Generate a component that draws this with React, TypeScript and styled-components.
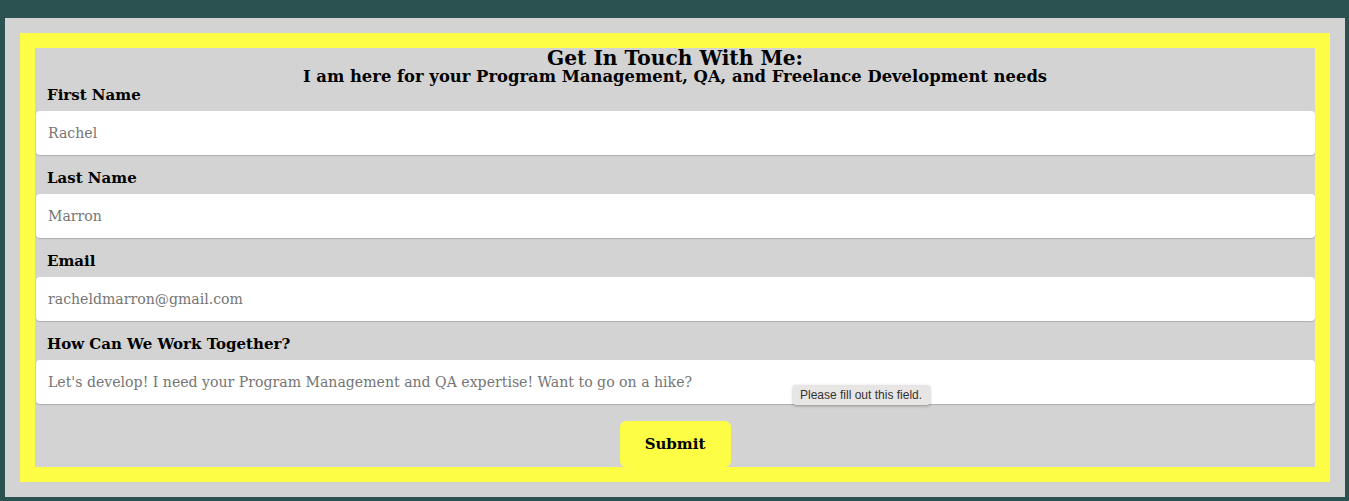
import React from "react";
import styled, { createGlobalStyle } from "styled-components";

const Global = createGlobalStyle`
  html, body { margin: 0; padding: 0; background: #2c5151; }
  body { padding: 18px 4px 4px 5px; }
  * { box-sizing: border-box; }
`;

const Page = styled.div`
  background: #d3d3d3;
  padding: 15px;
  height: 479px;
`;

const Frame = styled.form`
  position: relative;
  border: 15px solid #fdfd46;
  background: #d3d3d3;
  height: 449px;
  display: flex;
  flex-direction: column;
  font-family: "DejaVu Serif", Georgia, serif;
  color: #000;
`;

const Header = styled.header`
  text-align: center;
  height: 37px;
`;

const Title = styled.h2`
  margin: 0;
  font-size: 20.2px;
  line-height: 21px;
  font-weight: 700;
`;

const Subtitle = styled.h3`
  margin: 0;
  font-size: 16.4px;
  line-height: 16px;
  font-weight: 700;
`;

const Field = styled.div`
  position: relative;
  display: flex;
  flex-direction: column;
  margin-bottom: 13px;
`;

const Label = styled.label`
  font-size: 15px;
  font-weight: 700;
  line-height: 20px;
  padding-left: 12px;
  margin-bottom: 6px;
`;

const Input = styled.input`
  margin: 0 0 0 1px;
  width: 1279px;
  height: 44px;
  border: none;
  border-radius: 4px;
  box-shadow: 0 1px 1px rgba(0, 0, 0, 0.18);
  background: #fff;
  padding: 0 12px;
  font-family: "DejaVu Serif", Georgia, serif;
  font-size: 14.1px;
  color: #222;
  outline: none;
  &::placeholder { color: #757575; }
`;

const Tooltip = styled.div`
  position: absolute;
  left: 758px;
  top: 51px;
  background: #e8e5e5;
  color: #333;
  font-family: "Liberation Sans", Arial, sans-serif;
  font-size: 12px;
  line-height: 20px;
  padding: 0 8px 0 7px;
  border-radius: 3px;
  box-shadow: 0 1px 3px rgba(0, 0, 0, 0.3);
  white-space: nowrap;
`;

const Submit = styled.button`
  align-self: center;
  margin-top: 4px;
  width: 111px;
  height: 47px;
  border: none;
  border-radius: 6px;
  background: #fdfd46;
  font-family: "DejaVu Serif", Georgia, serif;
  font-size: 15px;
  font-weight: 700;
  color: #000;
  cursor: pointer;
`;

const fields = [
  { id: "first", label: "First Name", placeholder: "Rachel" },
  { id: "last", label: "Last Name", placeholder: "Marron" },
  { id: "email", label: "Email", placeholder: "racheldmarron@gmail.com" },
  {
    id: "message",
    label: "How Can We Work Together?",
    placeholder:
      "Let's develop! I need your Program Management and QA expertise! Want to go on a hike?",
    tip: true,
  },
];

export default function App() {
  return (
    <>
      <Global />
      <Page>
        <Frame onSubmit={(e) => e.preventDefault()}>
          <Header>
            <Title>Get In Touch With Me:</Title>
            <Subtitle>
              I am here for your Program Management, QA, and Freelance Development needs
            </Subtitle>
          </Header>
          {fields.map((f) => (
            <Field key={f.id}>
              <Label htmlFor={f.id}>{f.label}</Label>
              <Input id={f.id} placeholder={f.placeholder} />
              {f.tip && <Tooltip>Please fill out this field.</Tooltip>}
            </Field>
          ))}
          <Submit type="submit">Submit</Submit>
        </Frame>
      </Page>
    </>
  );
}
